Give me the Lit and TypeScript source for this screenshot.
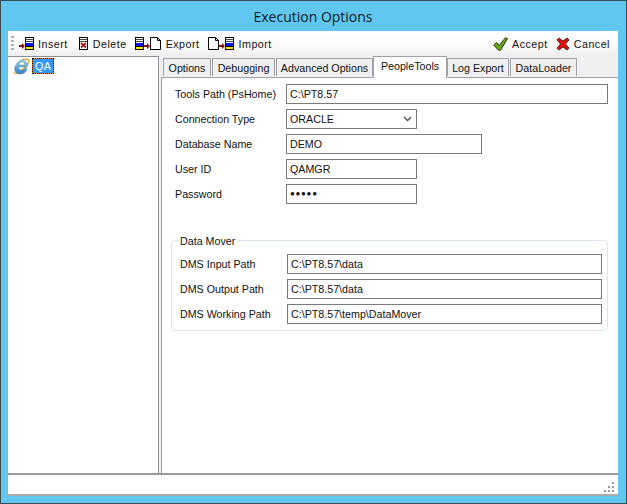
import { LitElement, html, css, svg } from "lit";
import { customElement } from "lit/decorators.js";

const stack = (x: number) => svg`
    <rect x=${x + 0.5} y="0.5" width="8" height="12" fill="#fff" stroke="#000"/>
    <path d="M${x + 1} 2.5h7M${x + 1} 4.500h7" stroke="#444"/>
    <rect x=${x + 1} y="6" width="7" height="3" fill="#0018e0"/>
    <rect x=${x} y="9" width="9" height="1" fill="#000"/>
    <rect x=${x + 1} y="10" width="7" height="2" fill="#ffe800"/>`;

const page = (x: number) => svg`
    <path d="M${x + 0.5} 0.5h7l3 3v9h-10z" fill="#fff" stroke="#000"/>
    <path d="M${x + 7.5} 0.5v3h3" fill="none" stroke="#000"/>`;

const arrow = (x: number, y: number) => svg`
    <path d="M${x} ${y}h3v-2l3 3l-3 3v-2h-3z" fill="#8a1010"/>`;

const icons = {
    insert: html`<svg width="15" height="13">${arrow(0, 8)}${stack(6)}</svg>`,
    del: html`<svg width="13" height="13">
        <rect x="3.500" y=".5" width="8" height="12" fill="#fff" stroke="#000"/>
        <path d="M4 2.500h7M4 4.500h7" stroke="#444"/>
        <path d="M5 6l5 4.500M10 6l-5 4.500" stroke="#a01818" stroke-width="1.800"/>
    </svg>`,
    exp: html`<svg width="27" height="13">${stack(0)}${arrow(9, 8)}${page(15)}</svg>`,
    imp: html`<svg width="27" height="13">${page(0)}${arrow(11, 8)}${stack(17)}</svg>`,
    check: html`<svg width="15" height="14">
        <path d="M.7 8l3-2.500 2.300 3L12.500.7l2 1-7 11.500h-2z" fill="#6aa51e" stroke="#1f3d0a"/>
    </svg>`,
    cross: html`<svg width="14" height="14">
        <path d="M1 3l2-2 4 3 4-3 2 2-3.500 4 3.500 4-2 2-4-3-4 3-2-2 3.500-4z" fill="#e01010" stroke="#3a1010" stroke-width=".8"/>
    </svg>`,
    ie: html`<svg width="17" height="17" viewBox="0 0 17 17">
        <defs>
            <linearGradient id="ie" x1="0" y1="0" x2="0" y2="1">
                <stop offset="0" stop-color="#9ad6f6"/>
                <stop offset="1" stop-color="#2f7fc4"/>
            </linearGradient>
        </defs>
        <path d="M1 14.500C3 17 14 10 16 3.500 16.500 1 12.500.5 9.500 2" fill="none" stroke="#d2ab3c" stroke-width="1.400"/>
        <path d="M6.500 16C2 15.500 .5 11.500 2.500 7.500 4.500 4 6.500 2 9 2c3.800 0 5.800 2.800 5.300 7H5.500c.2 3.500 4.500 4 6 1.500h2.800C13 14.500 10 16.500 6.500 16zM5.800 7h6C11.500 3 7 3 5.800 7z" fill="url(#ie)" fill-rule="evenodd" stroke="#75838c" stroke-width=".5"/>
    </svg>`,
};

@customElement("app-root")
class AppRoot extends LitElement {
    static styles = css`
        :host {
            display: block;
            width: 627px;
            height: 504px;
            font-family: "Liberation Sans", Arial, sans-serif;
            font-size: 10.7px;
            color: #111;
        }
        * {
            box-sizing: border-box;
        }
        .window {
            width: 627px;
            height: 504px;
            background: #60c8f0;
            border: 1px solid #3c4a52;
            padding: 0 8px 7px 7px;
            display: flex;
            flex-direction: column;
        }
        .title {
            height: 30px;
            flex: none;
            display: flex;
            align-items: center;
            justify-content: center;
            font-family: "Open Sans", sans-serif;
            font-size: 14px;
            color: #101820;
        }
        .body {
            flex: 1;
            min-height: 0;
            background: #f0f0f0;
            display: flex;
            flex-direction: column;
        }
        .toolbar {
            height: 25px;
            flex: none;
            display: flex;
            align-items: center;
            padding: 0 0 0 3px;
            background: linear-gradient(#ffffff, #fbfbfb 55%, #eeeeee);
        }
        .grip {
            width: 3px;
            height: 15px;
            margin-right: 5px;
            background: repeating-linear-gradient(#b4b4b4 0 2px, transparent 2px 4px);
        }
        .tool {
            display: flex;
            align-items: center;
            gap: 4px;
            margin-right: 8px;
            white-space: nowrap;
            letter-spacing: 0.5px;
        }
        .spacer {
            flex: 1;
        }
        .main {
            flex: 1;
            min-height: 0;
            display: flex;
            gap: 2px;
        }
        .tree {
            width: 151px;
            flex: none;
            background: #fff;
            border-top: 1px solid #8e8e96;
            border-right: 1px solid #8e8e96;
            padding: 1px 0 0 5px;
            display: flex;
            align-items: flex-start;
            gap: 2px;
        }
        .node {
            background: #3399ff;
            color: #fff;
            border: 1px solid #e08020;
            outline: 1px dotted #000;
            outline-offset: -1px;
            padding: 0 2px;
            height: 16px;
            line-height: 14px;
            letter-spacing: 0.5px;
        }
        .tabs {
            flex: 1;
            min-width: 0;
            display: flex;
            flex-direction: column;
        }
        .strip {
            height: 21px;
            flex: none;
            display: flex;
            align-items: flex-end;
            padding-left: 2px;
            gap: 1px;
        }
        .tab {
            height: 18px;
            background: #f0eff2;
            border: 1px solid #a0a0a8;
            border-bottom: none;
            display: flex;
            align-items: center;
            justify-content: center;
            margin-bottom: 1px;
        }
        .tab.active {
            height: 22px;
            background: #fff;
            margin: 0 -1px -1px -1px;
            position: relative;
            padding-bottom: 3px;
        }
        .page {
            flex: 1;
            min-height: 0;
            background: #fff;
            border-top: 1px solid #a0a0a8;
            border-left: 1px solid #a0a0a8;
            padding: 3px 10px 0 11px;
        }
        .row {
            display: flex;
            align-items: center;
            height: 25px;
        }
        .row label {
            width: 113px;
            flex: none;
            padding-left: 2px;
        }
        .field {
            height: 20px;
            border: 1px solid #7a7a7a;
            background: #fff;
            line-height: 18px;
            padding-left: 3px;
            display: flex;
            align-items: center;
            justify-content: space-between;
            white-space: nowrap;
        }
        .w-full {
            flex: 1;
        }
        .w-db {
            width: 196px;
        }
        .w-short {
            width: 131px;
        }
        .dots {
            font-size: 8px;
            letter-spacing: 0.700px;
        }
        .group {
            position: relative;
            margin: 34px 0 0 -2px;
            height: 91px;
            border: 1px solid #dce4ee;
            border-radius: 4px;
            padding: 10px 5px 0 8px;
        }
        .legend {
            position: absolute;
            top: -7px;
            left: 6px;
            background: #fff;
            padding: 0 2px;
            line-height: 14px;
        }
        .group .row label {
            width: 107px;
            padding-left: 0;
        }
        .status {
            height: 23px;
            flex: none;
            background: #fff;
            border-top: 2px solid #999;
            border-bottom: 2px solid #aaa;
            display: flex;
            justify-content: flex-end;
            align-items: flex-end;
            padding-right: 2px;
        }
    `;

    tool(icon: unknown, text: string) {
        return html`<div class="tool">${icon}<span>${text}</span></div>`;
    }

    row(label: string, value: unknown, width: string) {
        return html`<div class="row">
            <label>${label}</label>
            <div class="field ${width}">${value}</div>
        </div>`;
    }

    render() {
        const tabs = ["Options", "Debugging", "Advanced Options", "PeopleTools", "Log Export", "DataLoader"];
        const widths = [48, 63, 97, 74, 62, 67];
        return html`<div class="window">
            <div class="title">Execution Options</div>
            <div class="body">
                <div class="toolbar">
                    <div class="grip"></div>
                    ${this.tool(icons.insert, "Insert")} ${this.tool(icons.del, "Delete")}
                    ${this.tool(icons.exp, "Export")} ${this.tool(icons.imp, "Import")}
                    <div class="spacer"></div>
                    ${this.tool(icons.check, "Accept")} ${this.tool(icons.cross, "Cancel")}
                </div>
                <div class="main">
                    <div class="tree">${icons.ie}<div class="node">QA</div></div>
                    <div class="tabs">
                        <div class="strip">
                            ${tabs.map(
                                (t, i) =>
                                    html`<div class="tab ${i == 3 ? "active" : ""}" style="width:${widths[i]}px">${t}</div>`
                            )}
                        </div>
                        <div class="page">
                            ${this.row("Tools Path (PsHome)", "C:\\PT8.57", "w-full")}
                            ${this.row(
                                "Connection Type",
                                html`ORACLE
                                    <svg width="13" height="10"><path d="M1 3l3.500 3.500L8 3" fill="none" stroke="#555" stroke-width="1.500"/></svg>`,
                                "w-short"
                            )}
                            ${this.row("Database Name", "DEMO", "w-db")}
                            ${this.row("User ID", "QAMGR", "w-short")}
                            ${this.row("Password", html`<span class="dots">●●●●●</span>`, "w-short")}
                            <div class="group">
                                <div class="legend">Data Mover</div>
                                ${this.row("DMS Input Path", "C:\\PT8.57\\data", "w-full")}
                                ${this.row("DMS Output Path", "C:\\PT8.57\\data", "w-full")}
                                ${this.row("DMS Working Path", "C:\\PT8.57\\temp\\DataMover", "w-full")}
                            </div>
                        </div>
                    </div>
                </div>
                <div class="status">
                    <svg width="12" height="12" fill="#999">
                        <rect x="8" y="0" width="2" height="2"/>
                        <rect x="4" y="4" width="2" height="2"/>
                        <rect x="8" y="4" width="2" height="2"/>
                        <rect x="0" y="8" width="2" height="2"/>
                        <rect x="4" y="8" width="2" height="2"/>
                        <rect x="8" y="8" width="2" height="2"/>
                    </svg>
                </div>
            </div>
        </div>`;
    }
}
